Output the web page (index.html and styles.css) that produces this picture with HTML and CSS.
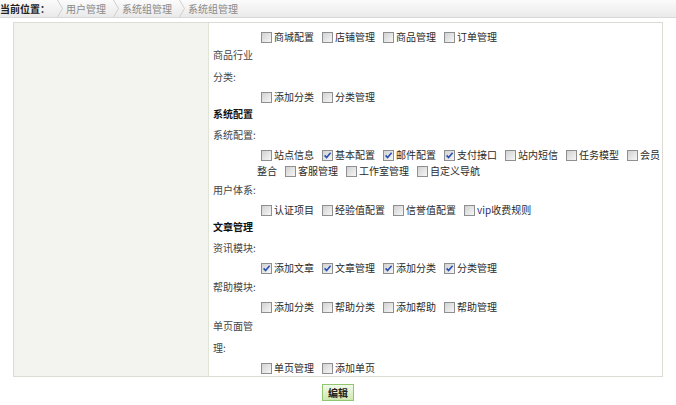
FILE: index.html
```html
<!DOCTYPE html>
<html lang="zh-CN">
<head>
<meta charset="utf-8">
<title>系统组管理</title>
<link rel="stylesheet" href="styles.css">
</head>
<body>
<div class="topbar">
  <span class="here">当前位置：</span>
  <span class="crumb"><svg viewBox="0 0 6 17"><polyline points="0.5,0 5.5,8.5 0.5,17" fill="none" stroke="#cfcfcf" stroke-width="1"/></svg>用户管理</span>
  <span class="crumb"><svg viewBox="0 0 6 17"><polyline points="0.5,0 5.5,8.5 0.5,17" fill="none" stroke="#cfcfcf" stroke-width="1"/></svg>系统组管理</span>
  <span class="crumb"><svg viewBox="0 0 6 17"><polyline points="0.5,0 5.5,8.5 0.5,17" fill="none" stroke="#cfcfcf" stroke-width="1"/></svg>系统组管理</span>
</div>
<div class="frame">
  <div class="side"></div>
  <div class="main">
    <div class="opts first"><label class="opt"><input type="checkbox">商城配置</label><label class="opt"><input type="checkbox">店铺管理</label><label class="opt"><input type="checkbox">商品管理</label><label class="opt"><input type="checkbox">订单管理</label></div>
    <div class="lbl">商品行业分类:</div>
    <div class="opts"><label class="opt"><input type="checkbox">添加分类</label><label class="opt"><input type="checkbox">分类管理</label></div>
    <div class="sec">系统配置</div>
    <div class="lbl">系统配置:</div>
    <div class="opts"><label class="opt"><input type="checkbox">站点信息</label><label class="opt"><input type="checkbox" checked>基本配置</label><label class="opt"><input type="checkbox" checked>邮件配置</label><label class="opt"><input type="checkbox" checked>支付接口</label><label class="opt"><input type="checkbox">站内短信</label><label class="opt"><input type="checkbox">任务模型</label><input class="cb" type="checkbox" id="hy"><label class="opt-t" for="hy">会员</label><label class="opt-t tail" for="hy">整合</label><label class="opt"><input type="checkbox">客服管理</label><label class="opt"><input type="checkbox">工作室管理</label><label class="opt"><input type="checkbox">自定义导航</label></div>
    <div class="lbl">用户体系:</div>
    <div class="opts"><label class="opt"><input type="checkbox">认证项目</label><label class="opt"><input type="checkbox">经验值配置</label><label class="opt"><input type="checkbox">信誉值配置</label><label class="opt"><input type="checkbox"><span class="latin">vip</span>收费规则</label></div>
    <div class="sec">文章管理</div>
    <div class="lbl">资讯模块:</div>
    <div class="opts"><label class="opt"><input type="checkbox" checked>添加文章</label><label class="opt"><input type="checkbox" checked>文章管理</label><label class="opt"><input type="checkbox" checked>添加分类</label><label class="opt"><input type="checkbox" checked>分类管理</label></div>
    <div class="lbl">帮助模块:</div>
    <div class="opts"><label class="opt"><input type="checkbox">添加分类</label><label class="opt"><input type="checkbox">帮助分类</label><label class="opt"><input type="checkbox">添加帮助</label><label class="opt"><input type="checkbox">帮助管理</label></div>
    <div class="lbl">单页面管理:</div>
    <div class="opts"><label class="opt"><input type="checkbox">单页管理</label><label class="opt"><input type="checkbox">添加单页</label></div>
  </div>
</div>
<div class="actions"><button class="btn" type="button">编辑</button></div>
</body>
</html>
```
FILE: styles.css
```css
html, body {
  margin: 0;
  background: #fff;
}
body {
  font-family: "Noto Sans CJK SC", "Noto Sans", sans-serif;
  font-size: 10px;
  line-height: 1.4;
  color: #333;
}
.topbar {
  height: 18px;
  box-sizing: border-box;
  border-bottom: 1px solid #d9d9d9;
  background: linear-gradient(#fbfbfb, #eaeaea);
  display: flex;
  align-items: center;
}
.here {
  font-weight: bold;
  color: #222;
}
.crumb {
  display: flex;
  align-items: center;
  height: 100%;
  color: #8a8a8a;
}
.crumb svg {
  width: 6px;
  height: 17px;
  margin: 0 3px 0 7px;
}
.frame {
  margin: 4px 0 0 13px;
  width: 650px;
  box-sizing: border-box;
  border: 1px solid #dcdcd5;
  display: flex;
}
.side {
  width: 194px;
  background: #f3f3f0;
  border-right: 1px solid #dfe4d6;
}
.main {
  flex: 1;
  min-width: 0;
  padding: 4px 0 0 4px;
}
.opts {
  padding: 1px 0 0 44px;
  line-height: 16px;
  color: #2a2a2a;
}
.opts.first {
  padding-top: 2px;
  margin-bottom: -1px;
}
.lbl {
  width: 46px;
  line-height: 22px;
  color: #444;
}
.sec {
  font-weight: bold;
  color: #111;
  line-height: 16px;
  padding-top: 1px;
  margin-bottom: 2px;
}
.opt,
.opt-t.tail {
  margin-right: 4px;
}
.opt input,
.cb {
  -webkit-appearance: none;
  appearance: none;
  width: 11px;
  height: 11px;
  margin: 0 2px 0 4px;
  box-sizing: border-box;
  border: 1px solid #8e8f90;
  background: linear-gradient(135deg, #d2d2d2, #f6f6f6);
  vertical-align: -2px;
}
.opt input:checked,
.cb:checked {
  background:
    url("data:image/svg+xml,%3Csvg xmlns='http://www.w3.org/2000/svg' viewBox='0 0 9 9'%3E%3Cpath d='M1.6 4.4 L3.6 6.6 L7.6 1.8' fill='none' stroke='%232850b4' stroke-width='1.6'/%3E%3C/svg%3E") no-repeat center / 9px 9px,
    linear-gradient(135deg, #d2d2d2, #f6f6f6);
}
.latin {
  color: #2e2e78;
}
.actions {
  text-align: center;
  margin-top: 7px;
}
.btn {
  font-family: "Noto Sans CJK SC", "Noto Sans", sans-serif;
  font-size: 10px;
  font-weight: bold;
  color: #222;
  height: 17px;
  padding: 0 5px;
  line-height: 15px;
  border: 1px solid #93c46f;
  background: linear-gradient(#f1fae8, #cde8b0);
}
```
